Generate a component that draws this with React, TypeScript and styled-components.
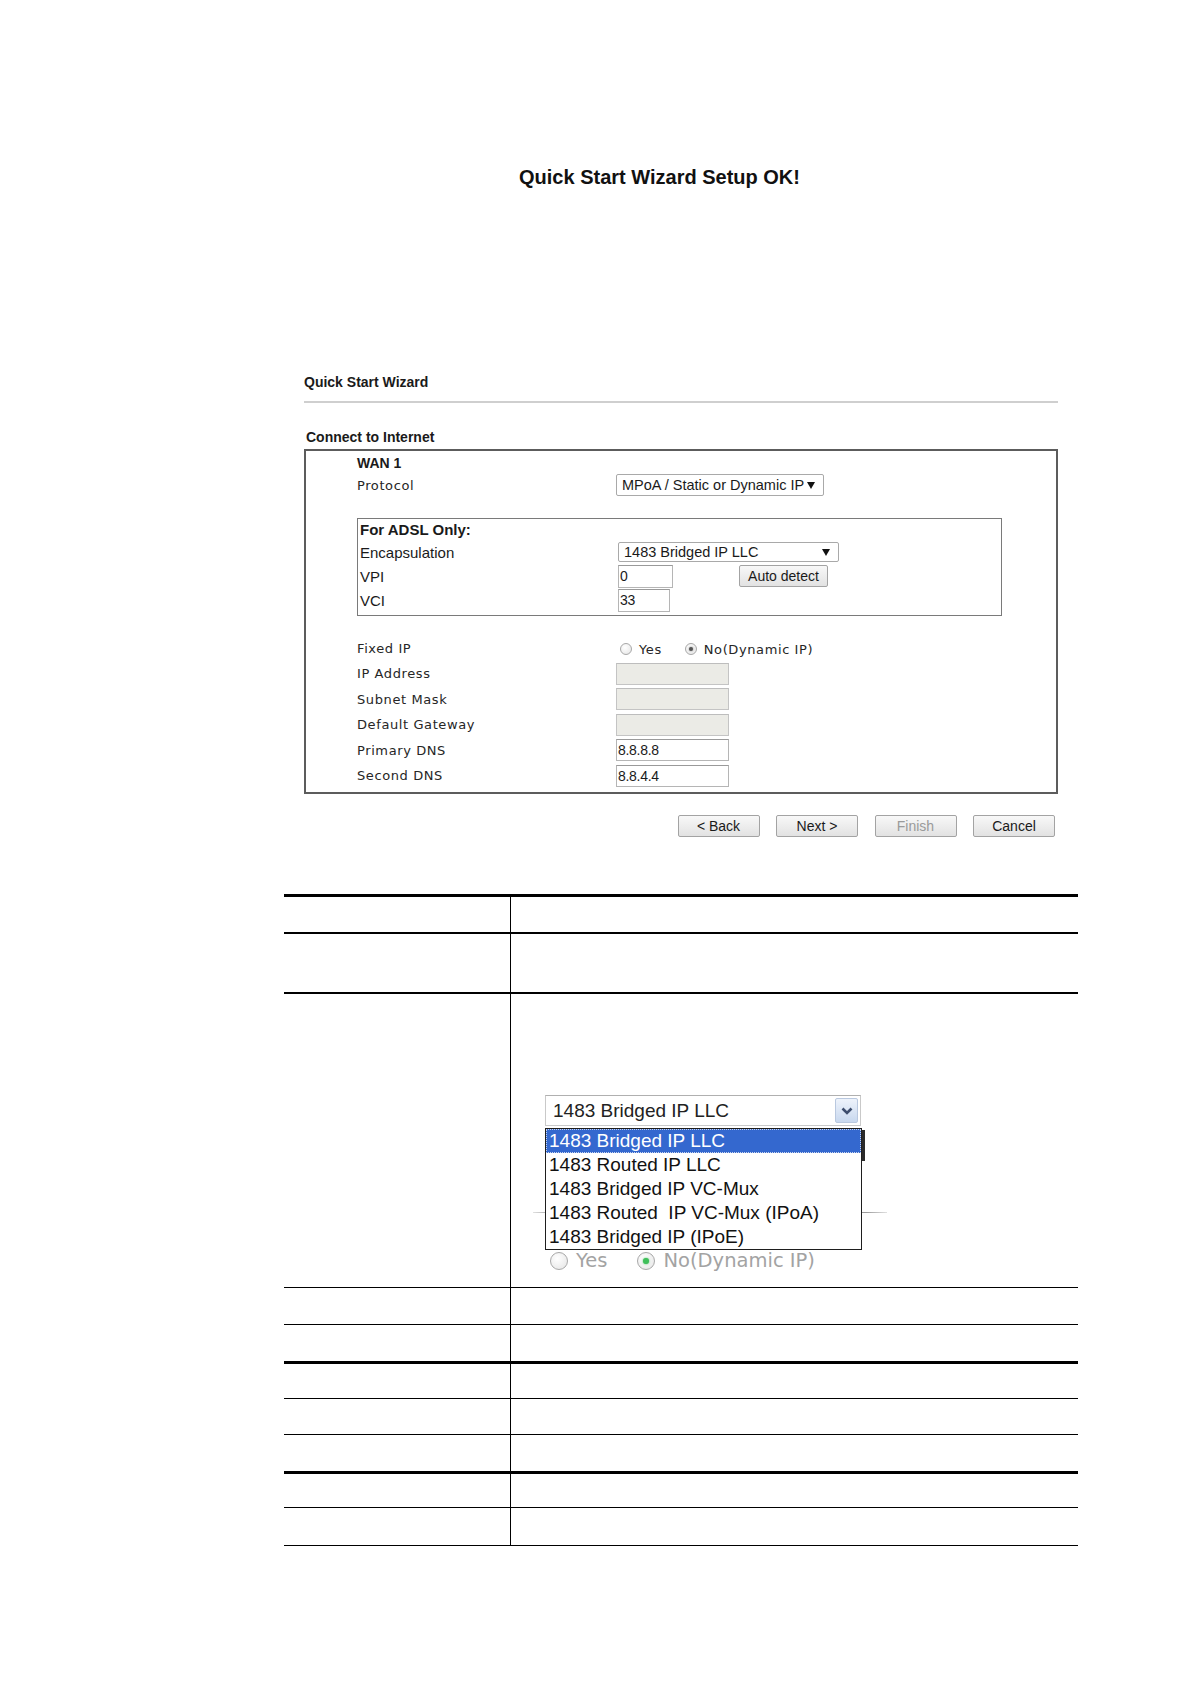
import styled, { createGlobalStyle } from "styled-components";

const GlobalStyle = createGlobalStyle`
  *, *::before, *::after {
    box-sizing: border-box;
  }

  html, body {
    margin: 0;
    padding: 0;
    background: #ffffff;
  }

  body {
    font-family: "Liberation Sans", Arial, sans-serif;
    color: #1a1a1a;
  }
`;

const Page = styled.div`
  width: 1191px;
  min-height: 1684px;
  padding-top: 165px;
`;

const PageTitle = styled.h1`
  margin: 0;
  padding-left: 519px;
  font: bold 20px/24px "Liberation Sans", Arial, sans-serif;
  color: #111;
`;

/* ---------- wizard panel ---------- */

const Wizard = styled.section`
  width: 754px;
  margin: 184px 0 0 304px;
`;

const PanelTitle = styled.div`
  font: bold 14px/18px "Liberation Sans", Arial, sans-serif;
  color: #1a1a1a;
`;

const Rule = styled.div`
  height: 2px;
  margin-top: 10px;
  background: #cfcfcf;
`;

const SectionTitle = styled.div`
  margin-top: 25px;
  padding-left: 2px;
  font: bold 14px/18px "Liberation Sans", Arial, sans-serif;
`;

const FormBox = styled.div`
  margin-top: 3px;
  height: 345px;
  border: 2px solid #5c5c5c;
  padding: 2px 0 0 51px;
`;

const WanTitle = styled.div`
  font: bold 14px/20px "Liberation Sans", Arial, sans-serif;
`;

const FieldRow = styled.div<{ $h?: number }>`
  display: grid;
  grid-template-columns: 259px auto;
  align-items: center;
  height: ${(p) => p.$h ?? 24}px;
`;

const Label = styled.span`
  font-family: "DejaVu Sans", Verdana, sans-serif;
  font-size: 13px;
  letter-spacing: 0.6px;
  color: #262626;
`;

const Value = styled.div`
  display: flex;
  align-items: center;
`;

const SelectBox = styled.div<{ $w: number; $h: number }>`
  display: flex;
  align-items: center;
  justify-content: space-between;
  width: ${(p) => p.$w}px;
  height: ${(p) => p.$h}px;
  padding: 0 8px 0 5px;
  border: 1px solid #a9a9a9;
  border-radius: 2px;
  background: #fff;
  font-size: 14.5px;
  color: #1a1a1a;
`;

const AdslBox = styled.div`
  width: 645px;
  height: 98px;
  margin-top: 21px;
  padding: 0 2px 3px 2px;
  border: 1px solid #7a7a7a;
`;

const AdslTitle = styled.div`
  font: bold 15px/21px "Liberation Sans", Arial, sans-serif;
`;

const AdslRow = styled.div`
  display: grid;
  grid-template-columns: 258px auto;
  align-items: center;
  height: 24px;
  font-size: 15px;
`;

const TextField = styled.div<{ $w: number; $h: number; $off?: boolean }>`
  display: flex;
  align-items: center;
  width: ${(p) => p.$w}px;
  height: ${(p) => p.$h}px;
  padding-left: 1px;
  border: 1px solid ${(p) => (p.$off ? "#c4c4c4" : "#b5b5b5")};
  border-top-color: ${(p) => (p.$off ? "#bdbdbd" : "#9a9a9a")};
  background: ${(p) => (p.$off ? "#ebebe6" : "#fff")};
  font-size: 14px;
  letter-spacing: -0.3px;
  color: #1a1a1a;
`;

const Button = styled.div<{ $w: number; $muted?: boolean }>`
  display: flex;
  align-items: center;
  justify-content: center;
  width: ${(p) => p.$w}px;
  height: 22px;
  border: 1px solid #a3a3a3;
  border-radius: 2px;
  background: linear-gradient(#f8f8f8, #e2e2e2);
  font-size: 14px;
  color: ${(p) => (p.$muted ? "#9a9a9a" : "#1a1a1a")};
`;

const DetectButton = styled(Button)`
  margin-left: 66px;
`;

const FieldList = styled.div`
  display: grid;
  grid-auto-rows: 22px;
  row-gap: 3.6px;
  margin-top: 21px;
`;

const RadioGroup = styled.div`
  display: flex;
  align-items: center;
  padding-left: 4px;
  padding-top: 2px;
`;

const RadioDot = styled.span<{ $on?: boolean; $size: number; $tint?: string }>`
  position: relative;
  display: inline-block;
  width: ${(p) => p.$size}px;
  height: ${(p) => p.$size}px;
  border: 1px solid #a8a8a8;
  border-radius: 50%;
  background: radial-gradient(circle at 40% 35%, #ffffff, #e4e4e4);

  &::after {
    content: "";
    display: ${(p) => (p.$on ? "block" : "none")};
    position: absolute;
    left: 50%;
    top: 50%;
    width: ${(p) => Math.round(p.$size * 0.36)}px;
    height: ${(p) => Math.round(p.$size * 0.36)}px;
    transform: translate(-50%, -50%);
    border-radius: 50%;
    background: ${(p) => p.$tint ?? "#555"};
    box-shadow: 0 0 2px ${(p) => p.$tint ?? "#777"};
  }
`;

const RadioText = styled.span<{ $gap: number }>`
  margin-left: 7px;
  margin-right: ${(p) => p.$gap}px;
  font-family: "DejaVu Sans", Verdana, sans-serif;
  font-size: 13px;
  letter-spacing: 0.6px;
  color: #262626;
`;

const ButtonRow = styled.div`
  display: flex;
  justify-content: flex-end;
  gap: 16.5px;
  margin-top: 21px;
  padding-right: 3px;
`;

/* ---------- table ---------- */

const SpecTable = styled.div`
  width: 794px;
  margin: 57px 0 0 284px;
  border-bottom: 1.5px solid #000;
`;

const SpecRow = styled.div<{ $h: number; $edge: number }>`
  display: grid;
  grid-template-columns: 227px 1fr;
  height: ${(p) => p.$h}px;
  border-top: ${(p) => p.$edge}px solid #000;
`;

const KeyCell = styled.div`
  border-right: 1px solid #000;
`;

const InfoCell = styled.div<{ $pad?: string }>`
  padding: ${(p) => p.$pad ?? "0"};
`;

/* ---------- encapsulation drop-down picture ---------- */

const Shot = styled.div`
  position: relative;
  width: 356px;
  padding-left: 12px;
`;

const BackLine = styled.div`
  position: absolute;
  left: 0;
  right: 2px;
  top: 117px;
  height: 1px;
  background: linear-gradient(90deg, #e0e0e0, #9a9a9a 6%, #9a9a9a 94%, #e0e0e0);
`;

const BigSelect = styled.div`
  position: relative;
  display: flex;
  align-items: center;
  width: 316px;
  height: 31px;
  padding-left: 7px;
  border: 1px solid #c9c9c9;
  border-top-color: #b0b0b0;
  background: #fff;
  font-size: 19px;
  color: #222;
`;

const ArrowButton = styled.div`
  position: absolute;
  right: 2px;
  top: 2px;
  display: flex;
  align-items: center;
  justify-content: center;
  width: 23px;
  height: 25px;
  border: 1px solid #b9c8df;
  border-radius: 2px;
  background: linear-gradient(#eef3fb, #c8d8ef);
`;

const ListBox = styled.div`
  position: relative;
  z-index: 1;
  width: 317px;
  margin-top: 2px;
  border: 1px solid #1e1e1e;
  background: #fff;
`;

const ListShadow = styled.div`
  position: absolute;
  right: -4px;
  top: 1px;
  width: 3px;
  height: 31px;
  background: #2a2a2a;
`;

const Option = styled.div<{ $active?: boolean }>`
  height: 24px;
  padding-left: 3px;
  font-size: 19px;
  line-height: 23px;
  white-space: pre;
  color: ${(p) => (p.$active ? "#ffffff" : "#111")};
  background: ${(p) => (p.$active ? "#3468cf" : "transparent")};
  outline: ${(p) => (p.$active ? "1px dotted #c8d4ee" : "none")};
  outline-offset: -1px;
`;

const FadedRadios = styled.div`
  display: flex;
  align-items: center;
  height: 22px;
  padding-left: 5px;
`;

const FadedText = styled.span<{ $gap: number }>`
  margin-left: 8px;
  margin-right: ${(p) => p.$gap}px;
  font-family: "DejaVu Sans", Verdana, sans-serif;
  font-size: 19.5px;
  line-height: 22px;
  color: #a3a3a3;
`;

const Caret = () => (
  <svg width="8" height="7" viewBox="0 0 8 7">
    <polygon points="0,0 8,0 4,7" fill="#111" />
  </svg>
);

const Chevron = () => (
  <svg width="12" height="8" viewBox="0 0 12 8">
    <polyline
      points="1.5,1.5 6,6 10.5,1.5"
      fill="none"
      stroke="#3d4d6e"
      strokeWidth="2.6"
    />
  </svg>
);

const encapOptions = [
  "1483 Bridged IP LLC",
  "1483 Routed IP LLC",
  "1483 Bridged IP VC-Mux",
  "1483 Routed  IP VC-Mux (IPoA)",
  "1483 Bridged IP (IPoE)",
];

const addressFields = [
  { label: "IP Address", value: "", off: true },
  { label: "Subnet Mask", value: "", off: true },
  { label: "Default Gateway", value: "", off: true },
  { label: "Primary DNS", value: "8.8.8.8", off: false },
  { label: "Second DNS", value: "8.8.4.4", off: false },
];

const tableRows = [
  { h: 38, edge: 3 },
  { h: 60, edge: 2 },
  { h: 295, edge: 2, demo: true },
  { h: 37, edge: 1.5 },
  { h: 37, edge: 1.5 },
  { h: 37, edge: 3 },
  { h: 36, edge: 1.5 },
  { h: 37, edge: 1.5 },
  { h: 36, edge: 3 },
  { h: 38, edge: 1.5 },
];

const EncapsulationShot = () => (
  <Shot>
    <BackLine />
    <BigSelect>
      1483 Bridged IP LLC
      <ArrowButton>
        <Chevron />
      </ArrowButton>
    </BigSelect>
    <ListBox>
      <ListShadow />
      {encapOptions.map((opt, i) => (
        <Option key={opt} $active={i === 0}>
          {opt}
        </Option>
      ))}
    </ListBox>
    <FadedRadios>
      <RadioDot $size={18} />
      <FadedText $gap={30}>Yes</FadedText>
      <RadioDot $size={18} $on $tint="#3fbf5a" />
      <FadedText $gap={0}>No(Dynamic IP)</FadedText>
    </FadedRadios>
  </Shot>
);

const App = () => {
  return (
    <Page>
      <GlobalStyle />
      <PageTitle>Quick Start Wizard Setup OK!</PageTitle>

      <Wizard>
        <PanelTitle>Quick Start Wizard</PanelTitle>
        <Rule />
        <SectionTitle>Connect to Internet</SectionTitle>

        <FormBox>
          <WanTitle>WAN 1</WanTitle>
          <FieldRow>
            <Label>Protocol</Label>
            <Value>
              <SelectBox $w={208} $h={22}>
                MPoA / Static or Dynamic IP
                <Caret />
              </SelectBox>
            </Value>
          </FieldRow>

          <AdslBox>
            <AdslTitle>For ADSL Only:</AdslTitle>
            <AdslRow>
              <span>Encapsulation</span>
              <Value>
                <SelectBox $w={221} $h={20}>
                  1483 Bridged IP LLC
                  <Caret />
                </SelectBox>
              </Value>
            </AdslRow>
            <AdslRow>
              <span>VPI</span>
              <Value>
                <TextField $w={55} $h={23}>0</TextField>
                <DetectButton $w={89}>Auto detect</DetectButton>
              </Value>
            </AdslRow>
            <AdslRow>
              <span>VCI</span>
              <Value>
                <TextField $w={52} $h={23}>33</TextField>
              </Value>
            </AdslRow>
          </AdslBox>

          <FieldList>
            <FieldRow $h={22}>
              <Label>Fixed IP</Label>
              <RadioGroup>
                <RadioDot $size={12} />
                <RadioText $gap={23}>Yes</RadioText>
                <RadioDot $size={12} $on />
                <RadioText $gap={0}>No(Dynamic IP)</RadioText>
              </RadioGroup>
            </FieldRow>
            {addressFields.map((f) => (
              <FieldRow key={f.label} $h={22}>
                <Label>{f.label}</Label>
                <TextField $w={113} $h={22} $off={f.off}>
                  {f.value}
                </TextField>
              </FieldRow>
            ))}
          </FieldList>
        </FormBox>

        <ButtonRow>
          <Button $w={82}>&lt; Back</Button>
          <Button $w={82}>Next &gt;</Button>
          <Button $w={82} $muted>
            Finish
          </Button>
          <Button $w={82}>Cancel</Button>
        </ButtonRow>
      </Wizard>

      <SpecTable>
        {tableRows.map((r, i) => (
          <SpecRow key={i} $h={r.h} $edge={r.edge}>
            <KeyCell />
            <InfoCell $pad={r.demo ? "101px 0 0 22px" : undefined}>
              {r.demo && <EncapsulationShot />}
            </InfoCell>
          </SpecRow>
        ))}
      </SpecTable>
    </Page>
  );
};

export default App;
